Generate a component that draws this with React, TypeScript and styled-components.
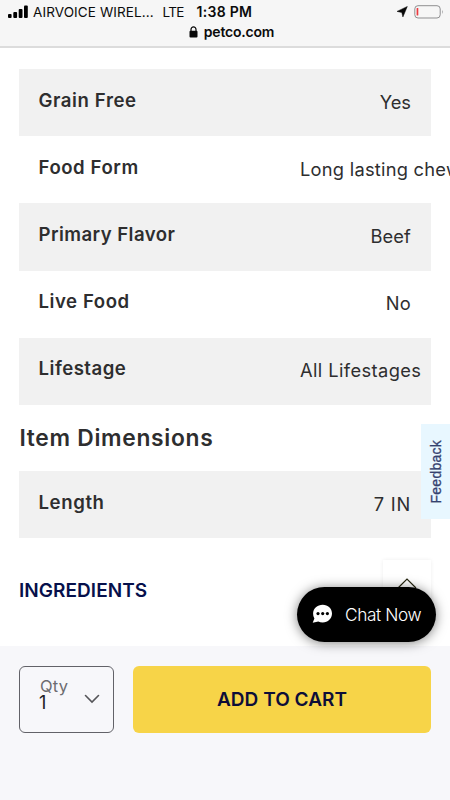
import React from "react";
import styled, { createGlobalStyle } from "styled-components";

const GlobalStyle = createGlobalStyle`
  * { box-sizing: border-box; }
  html, body { margin: 0; padding: 0; overflow: hidden; background: #fff; }
`;

const Screen = styled.div`
  position: relative;
  display: flex;
  flex-direction: column;
  width: 450px;
  height: 800px;
  overflow: hidden;
  background: #fff;
  color: #2e2e2f;
  font-family: Inter, "Liberation Sans", sans-serif;
`;

const Header = styled.header`
  flex: none;
  height: 48px;
  background: #f6f6f6;
  border-bottom: 2px solid #dcdcdc;
  color: #0b0b0b;
`;

const StatusBar = styled.div`
  display: flex;
  align-items: center;
  height: 24px;
  padding: 0 7px 0 8px;
  font-size: 13.5px;
  line-height: 24px;
  white-space: nowrap;
`;

const Signal = styled.svg`
  flex: none;
  margin-right: 5px;
`;

const Carrier = styled.span`
  width: 129.5px;
  letter-spacing: 0.1px;
`;

const Network = styled.span`
  width: 34px;
  letter-spacing: -0.6px;
`;

const Clock = styled.span`
  flex: 1;
  font-size: 14px;
  font-weight: 600;
  letter-spacing: 0.3px;
`;

const Battery = styled.svg`
  flex: none;
  margin-left: 6px;
`;

const AddressBar = styled.div`
  display: flex;
  align-items: center;
  justify-content: center;
  gap: 6px;
  height: 16px;
  padding-left: 13px;
  font-size: 14px;
  font-weight: 600;
  line-height: 16px;
  letter-spacing: -0.2px;
`;

const Content = styled.main`
  flex: none;
  height: 598px;
  padding: 21px 19px 0;
`;

const Row = styled.div<{ $shaded?: boolean }>`
  display: flex;
  justify-content: space-between;
  height: 67.2px;
  padding: 0 20px 0 19.5px;
  background: ${(p) => (p.$shaded ? "#f1f1f1" : "#fff")};
  white-space: nowrap;
`;

const Label = styled.span<{ $spacing: number }>`
  padding-top: 18.7px;
  font-size: 18.6px;
  font-weight: 600;
  line-height: 24px;
  letter-spacing: ${(p) => p.$spacing}px;
`;

const Value = styled.span<{ $spacing: number }>`
  display: flex;
  justify-content: flex-end;
  min-width: 111px;
  padding-top: 20.7px;
  font-size: 18.3px;
  line-height: 24px;
  letter-spacing: ${(p) => p.$spacing}px;
`;

const WideValue = styled(Value)`
  width: 111px;
  justify-content: flex-start;
`;

const Heading = styled.h2`
  height: 66px;
  margin: 0;
  padding: 19.3px 0 0 0.5px;
  font-size: 22.8px;
  font-weight: 600;
  line-height: 28px;
  letter-spacing: 0.7px;
`;

const Accordion = styled.section`
  display: flex;
  justify-content: space-between;
  height: 86px;
  padding-top: 22px;
`;

const AccordionTitle = styled.h3`
  margin: 0;
  padding-top: 19px;
  color: #06104b;
  font-size: 19px;
  font-weight: 600;
  line-height: 24px;
  letter-spacing: 0.05px;
`;

const TopButton = styled.button`
  width: 48px;
  height: 49px;
  padding: 0;
  border: 0;
  background: #fff;
  box-shadow: 0 0 4px rgba(0, 0, 0, 0.07);
`;

const Footer = styled.footer`
  display: flex;
  flex: 1;
  gap: 19px;
  align-items: flex-start;
  padding: 19.5px 19px 0;
  background: #f7f7fa;
`;

const Quantity = styled.div`
  display: flex;
  justify-content: space-between;
  width: 95px;
  height: 67.5px;
  padding: 10px 13px 0 20px;
  border: 1.4px solid #626268;
  border-radius: 6px;
`;

const QuantityText = styled.div`
  display: flex;
  flex-direction: column;
  font-size: 18px;
  line-height: 16.5px;
  color: #202022;
`;

const QuantityLabel = styled.span`
  color: #6c6c70;
  font-size: 16.5px;
  letter-spacing: 0.2px;
  line-height: 18px;
`;

const QuantityNumber = styled.span`
  margin-left: -1px;
`;

const Chevron = styled.svg`
  margin-top: 17px;
`;

const CartButton = styled.button`
  flex: 1;
  height: 67.5px;
  padding: 0;
  border: 0;
  border-radius: 6px;
  background: #f7d448;
  color: #0d0d38;
  font-family: inherit;
  font-size: 19px;
  font-weight: 600;
  letter-spacing: 0.05px;
`;

const FeedbackTab = styled.aside`
  position: absolute;
  top: 424px;
  right: 0;
  display: flex;
  align-items: center;
  justify-content: center;
  width: 29px;
  height: 95px;
  background: #e8f7ff;
  color: #34416f;
  font-family: "Liberation Sans", Arial, sans-serif;
  font-size: 14px;
  letter-spacing: 0.25px;
  -webkit-text-stroke: 0.3px #34416f;
`;

const FeedbackText = styled.span`
  writing-mode: vertical-rl;
  transform: rotate(180deg);
`;

const ChatButton = styled.button`
  position: absolute;
  top: 586.5px;
  left: 297px;
  display: flex;
  align-items: center;
  width: 139px;
  height: 55px;
  padding: 0 0 0 15px;
  gap: 12px;
  border: 0;
  border-radius: 28px;
  background: #000;
  color: #fff;
  font-family: inherit;
  font-size: 17.3px;
  font-weight: 300;
  letter-spacing: -0.4px;
  white-space: nowrap;
  box-shadow: 0 1px 12px rgba(0, 0, 0, 0.5);
`;

interface Spec {
  label: string;
  value: string;
  labelSpacing: number;
  valueSpacing: number;
  wide?: boolean;
}

const specs: Spec[] = [
  { label: "Grain Free", value: "Yes", labelSpacing: 0.6, valueSpacing: 0 },
  { label: "Food Form", value: "Long lasting chew", labelSpacing: 0.55, valueSpacing: 0.25, wide: true },
  { label: "Primary Flavor", value: "Beef", labelSpacing: 0.45, valueSpacing: 0.1 },
  { label: "Live Food", value: "No", labelSpacing: 0.55, valueSpacing: 0.3 },
  { label: "Lifestage", value: "All Lifestages", labelSpacing: 0.5, valueSpacing: 0.4, wide: true },
];

function SpecRow({ spec, shaded }: { spec: Spec; shaded: boolean }) {
  const ValueCell = spec.wide ? WideValue : Value;
  return (
    <Row $shaded={shaded}>
      <Label $spacing={spec.labelSpacing}>{spec.label}</Label>
      <ValueCell $spacing={spec.valueSpacing}>{spec.value}</ValueCell>
    </Row>
  );
}

export default function App() {
  return (
    <>
      <GlobalStyle />
      <Screen>
        <Header>
          <StatusBar>
            <Signal width="20" height="14" viewBox="0 0 20 14" fill="#000">
              <rect x="0" y="9" width="3.6" height="4" rx="1" />
              <rect x="5.3" y="7" width="3.8" height="6" rx="1" />
              <rect x="10.7" y="4" width="3.8" height="9" rx="1" />
              <rect x="16" y="0.5" width="3.8" height="12.5" rx="1" />
            </Signal>
            <Carrier>AIRVOICE WIREL...</Carrier>
            <Network>LTE</Network>
            <Clock>1:38 PM</Clock>
            <svg width="12" height="12" viewBox="0 0 12 12">
              <path d="M11.3.5 6.9 11 5.8 6.5 1 5.4Z" fill="#080808" stroke="#080808" strokeWidth=".5" strokeLinejoin="round" />
            </svg>
            <Battery width="29" height="14" viewBox="0 0 29 14">
              <rect x=".8" y=".7" width="25.4" height="12.3" rx="3.2" fill="none" stroke="#8f8f91" />
              <path d="M28 5q1.3 1.7 0 4Z" fill="#8f8f91" />
              <rect x="2.6" y="3" width="1.7" height="7.5" rx=".5" fill="#ed3b40" />
            </Battery>
          </StatusBar>
          <AddressBar>
            <svg width="9" height="12" viewBox="0 0 9 12">
              <path d="M2 5V3.4a2.5 2.5 0 0 1 5 0V5" fill="none" stroke="#080808" strokeWidth="1.2" />
              <rect x=".5" y="4.8" width="8" height="6.6" rx="1" fill="#080808" />
            </svg>
            <span>petco.com</span>
          </AddressBar>
        </Header>
        <Content>
          {specs.map((spec, index) => (
            <SpecRow key={spec.label} spec={spec} shaded={index % 2 === 0} />
          ))}
          <Heading>Item Dimensions</Heading>
          <SpecRow spec={{ label: "Length", value: "7 IN", labelSpacing: 0.6, valueSpacing: 0.8 }} shaded />
          <Accordion>
            <AccordionTitle>INGREDIENTS</AccordionTitle>
            <TopButton aria-label="Back to top">
              <svg width="20" height="12" viewBox="0 0 20 12">
                <path d="m1 11 9-9 9 9" fill="none" stroke="#25250f" strokeWidth="1.2" />
              </svg>
            </TopButton>
          </Accordion>
        </Content>
        <Footer>
          <Quantity>
            <QuantityText>
              <QuantityLabel>Qty</QuantityLabel>
              <QuantityNumber>1</QuantityNumber>
            </QuantityText>
            <Chevron width="16" height="10" viewBox="0 0 16 10">
              <path d="m1.5 1.5 6.5 6.5 6.5-6.5" fill="none" stroke="#555559" strokeWidth="1.6" strokeLinecap="round" />
            </Chevron>
          </Quantity>
          <CartButton>ADD TO CART</CartButton>
        </Footer>
        <FeedbackTab>
          <FeedbackText>Feedback</FeedbackText>
        </FeedbackTab>
        <ChatButton>
          <svg width="21" height="20" viewBox="0 0 21 20">
            <path d="M10.7.8C16 .8 20 4.7 20 9.6s-4 9-9.3 9c-1.7 0-3.1-.4-4.4-1.1L.7 18.8l1.7-4.3A8.6 8.6 0 0 1 1.1 9.6C1.1 4.7 5.4.8 10.7.8Z" fill="#fff" />
            <circle cx="6" cy="9.6" r="1.6" />
            <circle cx="10.7" cy="9.6" r="1.6" />
            <circle cx="15.4" cy="9.6" r="1.6" />
          </svg>
          <span>Chat Now</span>
        </ChatButton>
      </Screen>
    </>
  );
}
